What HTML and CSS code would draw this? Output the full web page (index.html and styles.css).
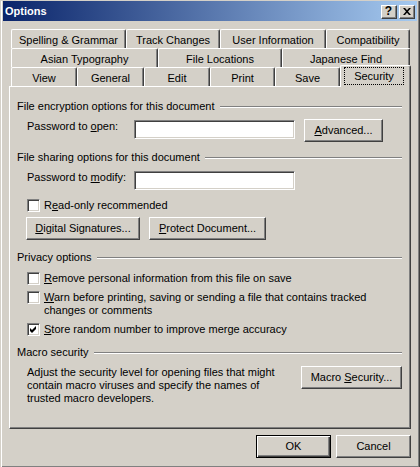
FILE: index.html
```html
<!DOCTYPE html>
<html>
<head>
<meta charset="utf-8">
<title>Options</title>
<link rel="stylesheet" href="styles.css">
</head>
<body>
<div class="dialog">
  <div class="titlebar">
    <span class="title">Options</span>
    <div class="caption-btns">
      <span class="cbtn help">?</span>
      <span class="cbtn close"><svg width="8" height="7" viewBox="0 0 8 7"><path d="M0 0h2l2 2.2L6 0h2L5 3.5 8 7H6L4 4.8 2 7H0l3-3.5z" fill="#000"/></svg></span>
    </div>
  </div>

  <div class="tabarea">
    <div class="tabrow">
      <div class="tab t-spell">Spelling &amp; Grammar</div>
      <div class="tab t-track">Track Changes</div>
      <div class="tab t-user">User Information</div>
      <div class="tab t-compat">Compatibility</div>
    </div>
    <div class="tabrow">
      <div class="tab t-asian">Asian Typography</div>
      <div class="tab t-files">File Locations</div>
      <div class="tab t-jfind">Japanese Find</div>
    </div>
    <div class="tabrow">
      <div class="tab t-view">View</div>
      <div class="tab t-general">General</div>
      <div class="tab t-edit">Edit</div>
      <div class="tab t-print">Print</div>
      <div class="tab t-save">Save</div>
      <div class="tab selected t-security"><span class="focus">Security</span></div>
    </div>

    <div class="panel">
      <div class="group-head"><span>File encryption options for this document</span><span class="rule"></span></div>
      <div class="field-row first">
        <span class="label">Password to <u>o</u>pen:</span>
        <span class="textbox"></span>
        <span class="btn adv"><span><u>A</u>dvanced...</span></span>
      </div>

      <div class="group-head gh2"><span>File sharing options for this document</span><span class="rule"></span></div>
      <div class="field-row second">
        <span class="label">Password to <u>m</u>odify:</span>
        <span class="textbox"></span>
      </div>
      <div class="check ro">
        <span class="box"></span>
        <span>R<u>e</u>ad-only recommended</span>
      </div>
      <div class="btn-row">
        <span class="btn dig"><span><u>D</u>igital Signatures...</span></span>
        <span class="btn prot"><span><u>P</u>rotect Document...</span></span>
      </div>

      <div class="group-head gh3"><span>Privacy options</span><span class="rule"></span></div>
      <div class="check c1">
        <span class="box"></span>
        <span><u>R</u>emove personal information from this file on save</span>
      </div>
      <div class="check c2">
        <span class="box"></span>
        <span><u>W</u>arn before printing, saving or sending a file that contains tracked<br>changes or comments</span>
      </div>
      <div class="check c3">
        <span class="box"><svg width="13" height="13" viewBox="0 0 13 13"><path d="M3 5 5 7 9 3v3L5 10 3 8z" fill="#000"/></svg></span>
        <span><u>S</u>tore random number to improve merge accuracy</span>
      </div>

      <div class="group-head gh4"><span>Macro security</span><span class="rule"></span></div>
      <div class="macro-row">
        <p class="macro-text">Adjust the security level for opening files that might<br>contain macro viruses and specify the names of<br>trusted macro developers.</p>
        <span class="btn macro"><span>Macro <u>S</u>ecurity...</span></span>
      </div>
    </div>
  </div>

  <div class="footer">
    <span class="btn default ok"><span>OK</span></span>
    <span class="btn cancel"><span>Cancel</span></span>
  </div>
</div>
</body>
</html>
```
FILE: styles.css
```css
html, body {
  margin: 0;
  padding: 0;
  background: #d4d0c8;
}

body {
  font-family: "Liberation Sans", Arial, sans-serif;
  font-size: 11px;
  color: #000;
}

.dialog {
  width: 420px;
  height: 467px;
  box-sizing: border-box;
  background: #d4d0c8;
  border-left: 1px solid #d4d0c8;
  border-right: 1px solid #404040;
  border-bottom: 1px solid #404040;
  box-shadow: inset 1px 0 0 #fff, inset -1px -1px 0 #808080;
  padding: 0 2px;
}

.titlebar {
  margin-top: 1px;
  height: 20px;
  display: flex;
  align-items: center;
  justify-content: space-between;
  padding: 0 2px;
  background: linear-gradient(to right, #0a246a, #a6caf0);
}

.title {
  color: #fff;
  font-weight: bold;
  font-size: 11px;
  line-height: 13px;
}

.caption-btns {
  display: flex;
  gap: 2px;
  margin-top: 1px;
}

.cbtn {
  width: 16px;
  height: 14px;
  box-sizing: border-box;
  background: #d4d0c8;
  border: 1px solid;
  border-color: #fff #404040 #404040 #fff;
  box-shadow: inset -1px -1px 0 #808080;
  display: flex;
  align-items: center;
  justify-content: center;
  font-weight: bold;
  font-size: 12px;
  line-height: 11px;
}

.cbtn.help {
  padding-right: 1px;
}

.tabarea {
  margin: 8px 6px 0 6px;
}

.tabrow {
  display: flex;
  height: 19px;
  padding-left: 2px;
}

.tab {
  height: 19px;
  box-sizing: border-box;
  border-top: 1px solid #fff;
  border-left: 1px solid #fff;
  border-right: 1px solid #404040;
  border-radius: 2px 2px 0 0;
  box-shadow: inset -1px 0 0 #808080;
  text-align: center;
  white-space: nowrap;
  padding-top: 3px;
  line-height: 14px;
  background: #d4d0c8;
}

.t-spell { width: 115px; }
.t-track { width: 94px; }
.t-user { width: 106px; }
.t-compat { width: 84px; }
.t-asian { width: 147px; }
.t-files { width: 124px; }
.t-jfind { width: 128px; }
.t-view { width: 66px; }
.t-general { width: 67px; }
.t-edit { width: 66px; }
.t-print { width: 65px; }
.t-save { width: 65px; }
.t-security { width: 71px; }

.tab.selected {
  position: relative;
  z-index: 1;
  height: 22px;
  margin-top: -2px;
  padding: 1px 6px 0 3px;
  box-shadow: inset -1px 0 0 #808080;
}

.focus {
  display: block;
  height: 18px;
  box-sizing: border-box;
  border: 1px dotted #000;
  line-height: 16px;
  text-align: center;
}

.panel {
  width: 402px;
  height: 343px;
  box-sizing: border-box;
  border: 1px solid;
  border-color: #fff #404040 #404040 #fff;
  box-shadow: inset -1px -1px 0 #808080;
  padding: 13px 8px 0 7px;
}

.group-head {
  display: flex;
  align-items: center;
  height: 13px;
  line-height: 13px;
  white-space: nowrap;
}

.rule {
  flex: 1;
  height: 0;
  border-top: 1px solid #808080;
  border-bottom: 1px solid #fff;
  margin-left: 5px;
}

.gh2 { margin-top: 9px; }
.gh3 { margin-top: 11px; }
.gh4 { margin-top: 10px; }

.field-row {
  display: flex;
  align-items: flex-start;
  margin-left: 10px;
}

.field-row.first { margin-top: 6px; }
.field-row.second { margin-top: 7px; }

.label {
  width: 107px;
  line-height: 13px;
  white-space: nowrap;
}

.field-row.first .label { margin-top: 1px; }
.field-row.second .label { margin-top: 0; }

.textbox {
  width: 161px;
  height: 19px;
  box-sizing: border-box;
  background: #fff;
  border: 1px solid;
  border-color: #808080 #fff #fff #808080;
  box-shadow: inset 1px 1px 0 #404040, inset -1px -1px 0 #d4d0c8;
}

.field-row.first .textbox { margin-top: 1px; }

.btn {
  display: flex;
  align-items: center;
  justify-content: center;
  height: 23px;
  box-sizing: border-box;
  background: #d4d0c8;
  border: 1px solid;
  border-color: #fff #404040 #404040 #fff;
  box-shadow: inset -1px -1px 0 #808080;
  white-space: nowrap;
  line-height: 13px;
}

.btn.adv { width: 79px; margin-left: 9px; }
.btn.dig { width: 114px; }
.btn.prot { width: 117px; margin-left: 9px; }
.btn.macro { width: 101px; margin-left: auto; }

.btn.default {
  border: 1px solid #000;
  box-shadow: inset 1px 1px 0 #fff, inset -1px -1px 0 #404040, inset -2px -2px 0 #808080;
}

.check {
  display: flex;
  align-items: flex-start;
  margin-left: 10px;
  line-height: 13px;
  white-space: nowrap;
}

.box {
  width: 13px;
  height: 13px;
  flex: none;
  box-sizing: border-box;
  background: #fff;
  border: 1px solid;
  border-color: #808080 #fff #fff #808080;
  box-shadow: inset 1px 1px 0 #404040, inset -1px -1px 0 #d4d0c8;
  margin-right: 4px;
  position: relative;
}

.box svg {
  position: absolute;
  left: -1px;
  top: -1px;
}

.check.ro { margin-top: 9px; }
.check.c1 { margin-top: 8px; }
.check.c2 { margin-top: 6px; }
.check.c3 { margin-top: 6px; }

.btn-row {
  display: flex;
  margin-top: 5px;
  margin-left: 9px;
}

.macro-row {
  display: flex;
  align-items: flex-start;
  margin-top: 7px;
}

.macro-text {
  margin: 0 0 0 10px;
  line-height: 13px;
  white-space: nowrap;
}

.footer {
  display: flex;
  justify-content: flex-end;
  gap: 5px;
  margin-top: 6px;
  padding-right: 6px;
}

.footer .btn { width: 75px; }

u {
  text-decoration: underline;
  text-underline-offset: 1px;
}
```
